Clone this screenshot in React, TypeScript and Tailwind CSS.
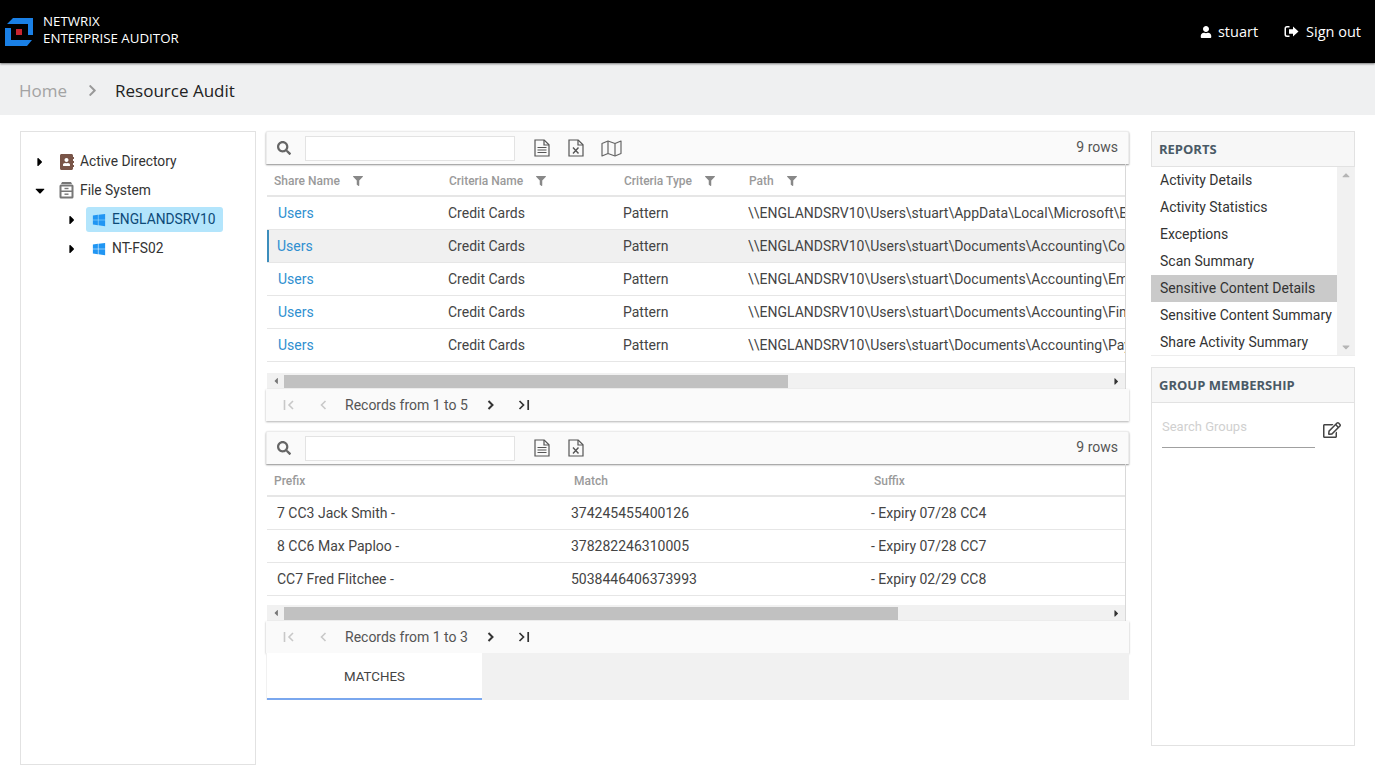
import { FaSearch, FaFilter, FaUser, FaWindows, FaAddressBook, FaRegEdit, FaChevronRight, FaCaretRight, FaCaretDown, FaCaretLeft, FaCaretUp } from "react-icons/fa";

function FileLines() {
  return (
    <svg width="16" height="18" viewBox="0 0 16 18" fill="none" stroke="#555" strokeWidth="1.2">
      <path d="M1 1h9.2l4.8 4.8v11.2H1z" />
      <path d="M10 1v5h5" />
      <path d="M3.5 8.5h9M3.5 11h9M3.5 13.5h9" />
    </svg>
  );
}

function FileX() {
  return (
    <svg width="16" height="18" viewBox="0 0 16 18" fill="none" stroke="#555" strokeWidth="1.2">
      <path d="M1 1h9.2l4.8 4.8v11.2H1z" />
      <path d="M10 1v5h5" />
      <path d="M5 8.5l5.5 6M10.5 8.5l-5.5 6" strokeWidth="1.4" />
    </svg>
  );
}

function MapIcon() {
  return (
    <svg width="21" height="17" viewBox="0 0 21 17" fill="none" stroke="#666" strokeWidth="1.2" strokeLinejoin="round">
      <path d="M1 3.5l6-2.5 7 2.5 6-2.5v12.5l-6 2.5-7-2.5-6 2.5z" />
      <path d="M7 1v12.5M14 3.5V16" />
    </svg>
  );
}

function SignOut() {
  return (
    <svg width="15" height="13" viewBox="0 0 15 13" fill="white">
      <path d="M5.5 1H3a2.5 2.5 0 0 0-2.5 2.5v6A2.5 2.5 0 0 0 3 12h2.5v-1.5H3a1 1 0 0 1-1-1v-6a1 1 0 0 1 1-1h2.5z" />
      <path d="M9 1.5l5.5 5-5.5 5V8.8H5V4.2h4z" />
    </svg>
  );
}

function Cabinet() {
  return (
    <svg width="15" height="17" viewBox="0 0 15 17">
      <path d="M3 0h9l1 2H2z" fill="#777" />
      <rect x="0.5" y="2.5" width="14" height="14" rx="1.5" fill="#777" />
      <rect x="2.5" y="4.5" width="10" height="4" fill="#fff" />
      <rect x="2.5" y="10" width="10" height="4.5" fill="#fff" />
      <rect x="5.5" y="5.8" width="4" height="1.4" fill="#777" />
      <rect x="5.5" y="11.5" width="4" height="1.4" fill="#777" />
    </svg>
  );
}

function Logo() {
  return (
    <svg width="28" height="28" viewBox="0 0 28 28">
      <path d="M8 0H28V17H23V6H2z" fill="#1a80e6" />
      <path d="M0 10H6V22H27L22 28H0z" fill="#1a80e6" />
      <rect x="11" y="11" width="6" height="6" fill="#c8242f" />
    </svg>
  );
}

function First({ c }: { c: string }) {
  return (
    <svg width="12" height="10" viewBox="0 0 12 10" fill="none" stroke={c} strokeWidth="1.6">
      <path d="M1.5 0v10M10 1L6 5l4 4" />
    </svg>
  );
}

function Prev({ c }: { c: string }) {
  return (
    <svg width="8" height="10" viewBox="0 0 8 10" fill="none" stroke={c} strokeWidth="1.6">
      <path d="M6.5 1L2.5 5l4 4" />
    </svg>
  );
}

function Next() {
  return (
    <svg width="8" height="10" viewBox="0 0 8 10" fill="none" stroke="#333" strokeWidth="2">
      <path d="M1.5 1l4 4-4 4" />
    </svg>
  );
}

function Last() {
  return (
    <svg width="12" height="10" viewBox="0 0 12 10" fill="none" stroke="#333" strokeWidth="1.7">
      <path d="M1.5 1l4 4-4 4M10.2 0v10" />
    </svg>
  );
}

function Toolbar({ map }: { map?: boolean }) {
  return (
    <div className="flex h-[33px] items-center rounded-t-[2px] bg-[#fafafa] shadow-[0_1px_2px_rgba(0,0,0,0.45)] border-t border-x border-[#ececec]">
      <FaSearch className="ml-[10px] text-[14px] text-[#666]" />
      <div className="ml-[14px] h-[25px] w-[210px] border border-[#e3e3e3] bg-white" />
      <div className="ml-[19px] flex items-center">
        <FileLines />
      </div>
      <div className="ml-[18px] flex items-center">
        <FileX />
      </div>
      {map && (
        <div className="ml-[17px] flex items-center">
          <MapIcon />
        </div>
      )}
      <span className="ml-auto mr-[10px] mb-[2px] text-[14px] text-[#555]">9 rows</span>
    </div>
  );
}

function HeaderCell({ label, w, filter }: { label: string; w: string; filter?: boolean }) {
  return (
    <div className={`${w} flex h-[33px] shrink-0 items-center border-b-2 border-[#e6e6e6] pt-[2px] pl-[7px] text-[12px] font-medium text-[#9a9a9a]`}>
      <span>{label}</span>
      {filter && <FaFilter className="ml-[13px] text-[10px] text-[#888]" />}
    </div>
  );
}

function Scrollbar({ thumb }: { thumb: string }) {
  return (
    <div className="flex h-[16px] items-center bg-[#f1f1f1]">
      <div className="flex w-[17px] justify-center text-[#777]">
        <FaCaretLeft className="text-[10px]" />
      </div>
      <div className={`${thumb} h-[13px] bg-[#c1c1c1]`} />
      <div className="ml-auto flex w-[17px] justify-center text-[#333]">
        <FaCaretRight className="text-[11px]" />
      </div>
    </div>
  );
}

function Pager({ to }: { to: number }) {
  return (
    <div className="flex h-[32px] items-center bg-[#fafafa] pl-[17px] text-[14px] text-[#555] shadow-[0_1px_2px_rgba(0,0,0,0.3)]">
      <First c="#c8c8c8" />
      <span className="ml-[24px] flex"><Prev c="#c8c8c8" /></span>
      <span className="ml-[18px] w-[126px]">Records from 1 to {to}</span>
      <span className="ml-[16px] flex"><Next /></span>
      <span className="ml-[23px] flex"><Last /></span>
    </div>
  );
}

const paths = [
  "\\\\ENGLANDSRV10\\Users\\stuart\\AppData\\Local\\Microsoft\\Edge\\User Data",
  "\\\\ENGLANDSRV10\\Users\\stuart\\Documents\\Accounting\\Contractors.xlsx",
  "\\\\ENGLANDSRV10\\Users\\stuart\\Documents\\Accounting\\Employees.xlsx",
  "\\\\ENGLANDSRV10\\Users\\stuart\\Documents\\Accounting\\Finance.xlsx",
  "\\\\ENGLANDSRV10\\Users\\stuart\\Documents\\Accounting\\Payroll.xlsx",
];

const matches = [
  ["7 CC3 Jack Smith -", "374245455400126", "- Expiry 07/28 CC4"],
  ["8 CC6 Max Paploo -", "378282246310005", "- Expiry 07/28 CC7"],
  ["CC7 Fred Flitchee -", "5038446406373993", "- Expiry 02/29 CC8"],
];

const reports = [
  "Activity Details",
  "Activity Statistics",
  "Exceptions",
  "Scan Summary",
  "Sensitive Content Details",
  "Sensitive Content Summary",
  "Share Activity Summary",
];

export default function App() {
  return (
    <div className="h-[770px] overflow-hidden bg-white font-['Roboto',sans-serif] text-[14px]">
      <header className="relative z-10 flex h-[63px] items-center bg-black pl-[5px] text-white shadow-[0_1px_2px_rgba(0,0,0,0.5)] font-['Open_Sans',sans-serif]">
        <Logo />
        <div className="ml-[10px] mb-[3px] text-[13.3px] leading-[17.5px] font-medium">
          <div>NETWRIX</div>
          <div>ENTERPRISE AUDITOR</div>
        </div>
        <div className="ml-auto flex items-center pr-[14px] text-[14.5px]">
          <FaUser className="text-[12px]" />
          <span className="ml-[6px]">stuart</span>
          <span className="ml-[26px] flex"><SignOut /></span>
          <span className="ml-[7px]">Sign out</span>
        </div>
      </header>
      <div className="flex h-[52px] items-center bg-[#eff0f1] pt-[3px] pl-[19px] font-['Open_Sans',sans-serif] text-[17px]">
        <span className="text-[#a3a3a3]">Home</span>
        <FaChevronRight className="ml-[19px] text-[13px] text-[#999]" />
        <span className="ml-[16px] text-[#222]">Resource Audit</span>
      </div>
      <main className="flex items-start pt-[16px] pl-[20px]">
        <aside className="h-[634px] w-[236px] shrink-0 border border-[#e2e2e2] pt-[16px] text-[#333]">
          <div className="flex h-[27px] items-center pl-[14px]">
            <FaCaretRight className="w-[10px] text-[14px] text-black" />
            <FaAddressBook className="ml-[14px] text-[16px] text-[#795548]" />
            <span className="ml-[5px] text-[13.8px]">Active Directory</span>
          </div>
          <div className="mt-[2px] flex h-[27px] items-center pl-[13px]">
            <FaCaretDown className="w-[12px] text-[15px] text-black" />
            <span className="ml-[13px] flex"><Cabinet /></span>
            <span className="ml-[6px] text-[13.8px]">File System</span>
          </div>
          <div className="mt-[3px] flex h-[25px] items-center pl-[46px]">
            <FaCaretRight className="w-[10px] text-[14px] text-black" />
            <div className="ml-[9px] flex h-[25px] w-[137px] items-center rounded-[3px] bg-[#b3e5fc] pl-[6px] text-[#0d4a78]">
              <FaWindows className="text-[14px] text-[#2196f3]" />
              <span className="ml-[6px] text-[13.8px]">ENGLANDSRV10</span>
            </div>
          </div>
          <div className="mt-[4px] flex h-[25px] items-center pl-[46px]">
            <FaCaretRight className="w-[10px] text-[14px] text-black" />
            <div className="ml-[9px] flex items-center pl-[6px]">
              <FaWindows className="text-[14px] text-[#2196f3]" />
              <span className="ml-[6px] text-[13.8px]">NT-FS02</span>
            </div>
          </div>
        </aside>

        <section className="ml-[10px] w-[863px] shrink-0 text-[#444]">
          <Toolbar map />
          <div className="mr-[3px] ml-[1px] border-r border-[#d9d9d9]">
            <div className="flex">
              <HeaderCell label="Share Name" w="w-[175px]" filter />
              <HeaderCell label="Criteria Name" w="w-[175px]" filter />
              <HeaderCell label="Criteria Type" w="w-[125px]" filter />
              <HeaderCell label="Path" w="flex-1" filter />
            </div>
            {paths.map((p, i) => (
              <div key={p} className={`flex h-[33px] items-center border-b border-[#e6e6e6] ${i === 1 ? "bg-[#f0f0f0] shadow-[inset_2px_0_0_#3c8dbc]" : ""}`}>
                <span className={`w-[181px] shrink-0 text-[#2f8fd0] ${i === 1 ? "pl-[10px]" : "pl-[11px]"}`}>Users</span>
                <span className="w-[175px] shrink-0">Credit Cards</span>
                <span className="w-[125px] shrink-0">Pattern</span>
                <span className="min-w-0 flex-1 overflow-hidden whitespace-nowrap">{p}</span>
              </div>
            ))}
            <div className="h-[11px]" />
            <Scrollbar thumb="w-[504px]" />
          </div>
          <Pager to={5} />

          <div className="mt-[10px]">
            <Toolbar />
          </div>
          <div className="mr-[3px] ml-[1px] border-r border-[#d9d9d9]">
            <div className="flex">
              <HeaderCell label="Prefix" w="w-[300px]" />
              <HeaderCell label="Match" w="w-[300px]" />
              <HeaderCell label="Suffix" w="flex-1" />
            </div>
            {matches.map((m) => (
              <div key={m[1]} className="flex h-[33px] items-center border-b border-[#e6e6e6]">
                <span className="w-[304px] shrink-0 pl-[10px]">{m[0]}</span>
                <span className="w-[300px] shrink-0">{m[1]}</span>
                <span>{m[2]}</span>
              </div>
            ))}
            <div className="h-[9px]" />
            <Scrollbar thumb="w-[614px]" />
          </div>
          <Pager to={3} />
          <div className="flex h-[47px] bg-[#f1f1f1]">
            <div className="ml-[1px] flex w-[215px] items-center justify-center border-b-2 border-[#7aa7ee] bg-white pt-[3px] text-[13.3px] text-[#444]">MATCHES</div>
          </div>
        </section>

        <aside className="ml-[22px] w-[204px] shrink-0 text-[#333]">
          <div className="flex h-[36px] items-center border border-[#e2e2e2] bg-[#f7f7f7] pt-[2px] pl-[7px] font-['Open_Sans',sans-serif] text-[13px] font-bold text-[#4a5a66]">REPORTS</div>
          <div className="relative h-[189px] border-b border-[#ededed]">
            <div className="absolute top-0 right-0 bottom-0 flex w-[18px] flex-col items-center justify-between bg-[#f1f1f1] py-[2px] text-[#b5b5b5]">
              <FaCaretUp className="text-[12px]" />
              <FaCaretDown className="text-[12px]" />
            </div>
            {reports.map((r, i) => (
              <div key={r} className={`mr-[18px] flex h-[27px] items-center pl-[9px] whitespace-nowrap ${i === 4 ? "bg-[#cacaca]" : ""}`}>{r}</div>
            ))}
          </div>
          <div className="mt-[11px] h-[379px] border border-[#e2e2e2]">
            <div className="flex h-[35px] items-center border-b border-[#e2e2e2] bg-[#f7f7f7] pt-[2px] pl-[7px] font-['Open_Sans',sans-serif] text-[13px] font-bold text-[#4a5a66]">GROUP MEMBERSHIP</div>
            <div className="flex pt-[14px] pl-[10px]">
              <div className="h-[31px] w-[153px] border-b border-[#a0a0a0] text-[13px] leading-[20px] text-[#d0d0d0]">Search Groups</div>
              <FaRegEdit className="mt-[4px] ml-[8px] text-[18px] text-[#444]" />
            </div>
          </div>
        </aside>
      </main>
    </div>
  );
}
